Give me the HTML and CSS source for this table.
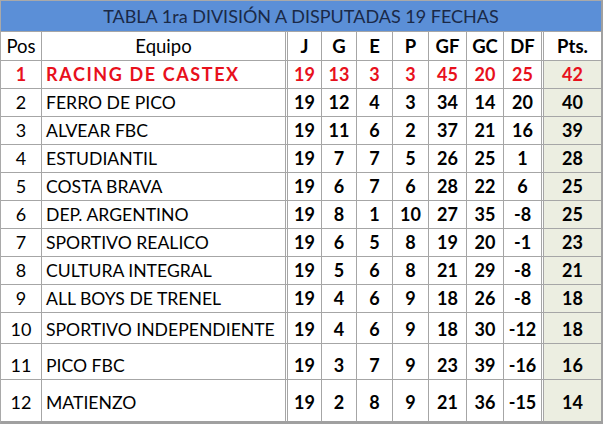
FILE: index.html
```html
<!DOCTYPE html>
<html lang="es">
<head>
<meta charset="utf-8">
<title>Tabla 1ra División</title>
<link rel="stylesheet" href="styles.css">
</head>
<body>
<div class="sheet">
  <div class="title">TABLA 1ra DIVISIÓN A DISPUTADAS 19 FECHAS</div>
  <div class="row head">
    <div class="c pos">Pos</div>
    <div class="c team center dbl">Equipo</div>
    <div class="c b">J</div><div class="c b">G</div><div class="c b">E</div><div class="c b">P</div>
    <div class="c b">GF</div><div class="c b">GC</div><div class="c b dbl">DF</div>
    <div class="c b pts-h">Pts.</div>
  </div>
  <div class="row lead">
    <div class="c pos b">1</div><div class="c team b dbl">RACING DE CASTEX</div>
    <div class="c b">19</div><div class="c b">13</div><div class="c b">3</div><div class="c b">3</div>
    <div class="c b">45</div><div class="c b">20</div><div class="c b dbl">25</div><div class="c b pts">42</div>
  </div>
  <div class="row">
    <div class="c pos">2</div><div class="c team dbl">FERRO DE PICO</div>
    <div class="c b">19</div><div class="c b">12</div><div class="c b">4</div><div class="c b">3</div>
    <div class="c b">34</div><div class="c b">14</div><div class="c b dbl">20</div><div class="c b pts">40</div>
  </div>
  <div class="row">
    <div class="c pos">3</div><div class="c team dbl">ALVEAR FBC</div>
    <div class="c b">19</div><div class="c b">11</div><div class="c b">6</div><div class="c b">2</div>
    <div class="c b">37</div><div class="c b">21</div><div class="c b dbl">16</div><div class="c b pts">39</div>
  </div>
  <div class="row">
    <div class="c pos">4</div><div class="c team dbl">ESTUDIANTIL</div>
    <div class="c b">19</div><div class="c b">7</div><div class="c b">7</div><div class="c b">5</div>
    <div class="c b">26</div><div class="c b">25</div><div class="c b dbl">1</div><div class="c b pts">28</div>
  </div>
  <div class="row">
    <div class="c pos">5</div><div class="c team dbl">COSTA BRAVA</div>
    <div class="c b">19</div><div class="c b">6</div><div class="c b">7</div><div class="c b">6</div>
    <div class="c b">28</div><div class="c b">22</div><div class="c b dbl">6</div><div class="c b pts">25</div>
  </div>
  <div class="row">
    <div class="c pos">6</div><div class="c team dbl">DEP. ARGENTINO</div>
    <div class="c b">19</div><div class="c b">8</div><div class="c b">1</div><div class="c b">10</div>
    <div class="c b">27</div><div class="c b">35</div><div class="c b dbl">-8</div><div class="c b pts">25</div>
  </div>
  <div class="row">
    <div class="c pos">7</div><div class="c team dbl">SPORTIVO REALICO</div>
    <div class="c b">19</div><div class="c b">6</div><div class="c b">5</div><div class="c b">8</div>
    <div class="c b">19</div><div class="c b">20</div><div class="c b dbl">-1</div><div class="c b pts">23</div>
  </div>
  <div class="row">
    <div class="c pos">8</div><div class="c team dbl">CULTURA INTEGRAL</div>
    <div class="c b">19</div><div class="c b">5</div><div class="c b">6</div><div class="c b">8</div>
    <div class="c b">21</div><div class="c b">29</div><div class="c b dbl">-8</div><div class="c b pts">21</div>
  </div>
  <div class="row">
    <div class="c pos">9</div><div class="c team dbl">ALL BOYS DE TRENEL</div>
    <div class="c b">19</div><div class="c b">4</div><div class="c b">6</div><div class="c b">9</div>
    <div class="c b">18</div><div class="c b">26</div><div class="c b dbl">-8</div><div class="c b pts">18</div>
  </div>
  <div class="row r10">
    <div class="c pos">10</div><div class="c team dbl">SPORTIVO INDEPENDIENTE</div>
    <div class="c b">19</div><div class="c b">4</div><div class="c b">6</div><div class="c b">9</div>
    <div class="c b">18</div><div class="c b">30</div><div class="c b dbl">-12</div><div class="c b pts">18</div>
  </div>
  <div class="row r11">
    <div class="c pos">11</div><div class="c team dbl">PICO FBC</div>
    <div class="c b">19</div><div class="c b">3</div><div class="c b">7</div><div class="c b">9</div>
    <div class="c b">23</div><div class="c b">39</div><div class="c b dbl">-16</div><div class="c b pts">16</div>
  </div>
  <div class="row r12">
    <div class="c pos">12</div><div class="c team dbl">MATIENZO</div>
    <div class="c b">19</div><div class="c b">2</div><div class="c b">8</div><div class="c b">9</div>
    <div class="c b">21</div><div class="c b">36</div><div class="c b dbl">-15</div><div class="c b pts">14</div>
  </div>
</div>
</body>
</html>
```

FILE: styles.css
```css
html, body {
  margin: 0;
  padding: 0;
  background: #ffffff;
}
body {
  width: 605px;
  height: 427px;
  font-family: Lato, "Open Sans", "Liberation Sans", sans-serif;
  color: #000;
}
.sheet {
  width: 600px;
  border-top: 1px solid #a9a9a9;
  border-left: 1px solid #a9a9a9;
  border-right: 2px solid #a0a0a0;
  border-bottom: 3px solid #a0a0a0;
}
.title {
  height: 30px;
  border-bottom: 1px solid #a6a6a6;
  background: #5b8fd7;
  color: #1a2947;
  font-size: 18px;
  line-height: 31px;
  text-align: center;
}
.row {
  display: grid;
  grid-template-columns: 41px 246px 34px 35px 36px 36px 38px 37px 40px 57px;
  height: 28px;
}
.row.head { height: 29px; }
.row.r10 { height: 31px; }
.row.r11 { height: 36px; }
.row.r12 { height: 41px; }
.c {
  box-sizing: border-box;
  border-right: 1px solid #a6a6a6;
  border-bottom: 1px solid #a6a6a6;
  display: flex;
  align-items: flex-end;
  justify-content: center;
  padding-bottom: 3px;
  font-size: 18px;
  line-height: 21px;
  white-space: nowrap;
}
.row.head .c { font-size: 18.5px; }
.row.r12 .c { border-bottom: none; padding-bottom: 8px; }
.c.dbl { border-right: 3px double #a6a6a6; }
.c:last-child { border-right: none; }
.c.b { font-weight: 700; }
.c.team {
  justify-content: flex-start;
  padding-left: 4px;
  font-size: 17.6px;
}
.c.team.b { font-size: 18px; letter-spacing: 1.6px; }
.c.team.center { justify-content: center; padding-left: 0; }
.c.pts { background: #eceee1; }
.c.pts-h { background: #ffffff; }
.row.lead .c { color: #e8101c; }
```
